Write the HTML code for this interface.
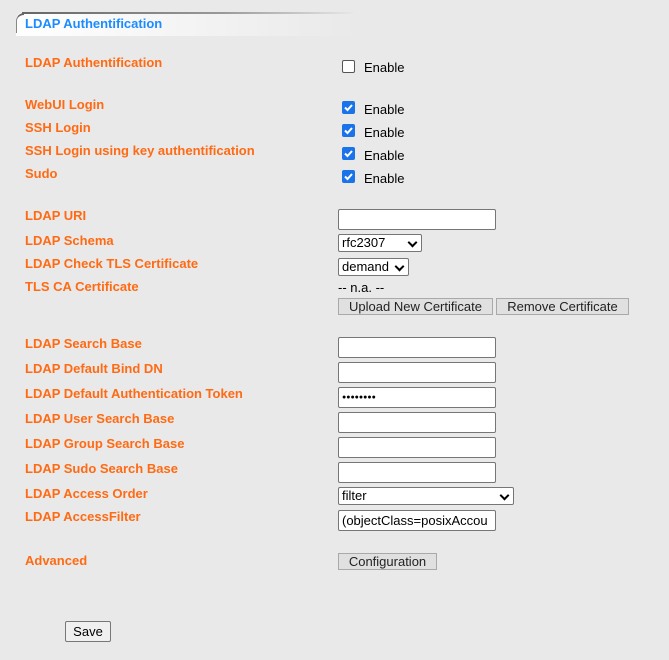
<!DOCTYPE html>
<html><head><style>
body{margin:0;width:669px;height:660px;background:#e9e9e9;font-family:"Liberation Sans",Arial,sans-serif;position:relative;overflow:hidden}
.a{position:absolute}
.l{position:absolute;left:25px;color:#ff6a13;font-weight:bold;font-size:13px;line-height:16px}
.en{position:absolute;left:364px;font-size:13px;color:#000;line-height:16px}
.cb{position:absolute;left:342px;width:13px;height:13px;box-sizing:border-box;border-radius:2px}
.cb.off{border:1px solid #555;background:#fff}
.cb.on{background:#1a73e8}
.cb.on svg{position:absolute;left:0;top:0}
.in{position:absolute;left:338px;width:158px;height:21px;box-sizing:border-box;border:1px solid #767676;border-radius:2px;background:#fff;font-size:13px;line-height:19px;padding-left:3px}
.sel{position:absolute;left:338px;box-sizing:border-box;border:1px solid #767676;border-radius:2px;background:#fff;font-size:13px;line-height:16px;padding-left:3px;height:18px}
.sel:after{content:"";position:absolute;right:5px;top:4px;width:5px;height:5px;border-right:2px solid #000;border-bottom:2px solid #000;transform:rotate(45deg)}
.btn{position:absolute;box-sizing:border-box;border:1px solid #a9a9a9;background:#e0e0e0;font-size:13px;line-height:15px;text-align:center;color:#222}
</style></head><body>
<div class="a" style="left:16px;top:12px;width:340px;height:24px;border-top-left-radius:8px;background:linear-gradient(to right,#fff 0%,#f4f4f4 50%,#e9e9e9 100%)"></div>
<div class="a" style="left:22px;top:12px;width:334px;height:2px;background:linear-gradient(to right,#666,#999 60%,#e9e9e9)"></div>
<div class="a" style="left:16px;top:13px;width:8px;height:20px;border-top-left-radius:8px;border-left:1px solid #888;border-top:2px solid #666;box-sizing:border-box"></div>
<div class="a" style="left:25px;top:16px;color:#1a8cff;font-weight:bold;font-size:13px">LDAP Authentification</div>

<div class="l" style="top:55px">LDAP Authentification</div>
<div class="cb off" style="top:60px"></div><div class="en" style="top:60px">Enable</div>

<div class="l" style="top:97px">WebUI Login</div>
<div class="l" style="top:120px">SSH Login</div>
<div class="l" style="top:143px">SSH Login using key authentification</div>
<div class="l" style="top:166px">Sudo</div>
<div class="cb on" style="top:101px"><svg width="13" height="13"><path d="M3 6.5l2.5 2.5 4.5-5" stroke="#fff" stroke-width="2" fill="none"/></svg></div><div class="en" style="top:102px">Enable</div>
<div class="cb on" style="top:124px"><svg width="13" height="13"><path d="M3 6.5l2.5 2.5 4.5-5" stroke="#fff" stroke-width="2" fill="none"/></svg></div><div class="en" style="top:125px">Enable</div>
<div class="cb on" style="top:147px"><svg width="13" height="13"><path d="M3 6.5l2.5 2.5 4.5-5" stroke="#fff" stroke-width="2" fill="none"/></svg></div><div class="en" style="top:148px">Enable</div>
<div class="cb on" style="top:170px"><svg width="13" height="13"><path d="M3 6.5l2.5 2.5 4.5-5" stroke="#fff" stroke-width="2" fill="none"/></svg></div><div class="en" style="top:171px">Enable</div>

<div class="l" style="top:208px">LDAP URI</div>
<div class="in" style="top:209px"></div>
<div class="l" style="top:233px">LDAP Schema</div>
<div class="sel" style="top:234px;width:84px">rfc2307</div>
<div class="l" style="top:256px">LDAP Check TLS Certificate</div>
<div class="sel" style="top:258px;width:71px">demand</div>
<div class="l" style="top:279px">TLS CA Certificate</div>
<div class="a" style="left:338px;top:280px;font-size:13px">-- n.a. --</div>
<div class="btn" style="left:338px;top:298px;width:155px;height:17px">Upload New Certificate</div>
<div class="btn" style="left:496px;top:298px;width:133px;height:17px">Remove Certificate</div>

<div class="l" style="top:336px">LDAP Search Base</div><div class="in" style="top:337px"></div>
<div class="l" style="top:361px">LDAP Default Bind DN</div><div class="in" style="top:362px"></div>
<div class="l" style="top:386px">LDAP Default Authentication Token</div><div class="in" style="top:387px;font-size:7px;letter-spacing:0px">●●●●●●●●</div>
<div class="l" style="top:411px">LDAP User Search Base</div><div class="in" style="top:412px"></div>
<div class="l" style="top:436px">LDAP Group Search Base</div><div class="in" style="top:437px"></div>
<div class="l" style="top:461px">LDAP Sudo Search Base</div><div class="in" style="top:462px"></div>
<div class="l" style="top:486px">LDAP Access Order</div>
<div class="sel" style="top:487px;width:176px">filter</div>
<div class="l" style="top:509px">LDAP AccessFilter</div>
<div class="in" style="top:510px;overflow:hidden;white-space:nowrap">(objectClass=posixAccou</div>

<div class="l" style="top:553px">Advanced</div>
<div class="btn" style="left:338px;top:553px;width:99px;height:17px">Configuration</div>

<div class="btn" style="left:65px;top:621px;width:46px;height:21px;background:#f0f0f0;border-color:#777;border-radius:2px;line-height:19px;color:#000">Save</div>
</body></html>
